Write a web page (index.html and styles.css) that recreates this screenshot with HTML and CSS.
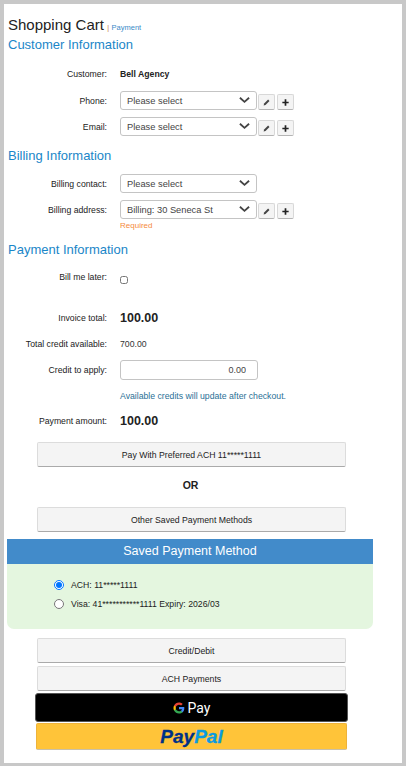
FILE: index.html
```html
<!DOCTYPE html>
<html lang="en">
<head>
  <meta charset="UTF-8" />
  <title>Shopping Cart</title>
  <meta name="viewport" content="width=device-width, initial-scale=1.0" />
  <link rel="stylesheet" href="styles.css">
</head>
<body>

<div class="panel">

  <div class="title-line">
    <span class="title">Shopping Cart</span>
    <span class="crumb-sep">|</span>
    <a class="crumb" href="#payment">Payment</a>
  </div>

  <!-- Customer -->
  <h2 class="h-customer">Customer Information</h2>
  <div class="row r-customer">
    <label>Customer:</label>
    <strong class="agency">Bell Agency</strong>
  </div>
  <div class="row r-phone">
    <label>Phone:</label>
    <div class="select-wrap">
      <select><option>Please select</option></select>
      <svg class="chev" viewBox="0 0 12 8"><path d="M1 1.500 6 6l5-4.500" /></svg>
    </div>
    <button class="tool"><svg viewBox="0 0 10 10"><path class="pen" d="M6.800 1.800 8.300 3.300 3.900 7.700 1.800 8.300 2.400 6.200Z" /></svg></button>
    <button class="tool"><svg viewBox="0 0 10 10"><path class="plus" d="M5 1.500v7M1.500 5h7" /></svg></button>
  </div>
  <div class="row r-email">
    <label>Email:</label>
    <div class="select-wrap">
      <select><option>Please select</option></select>
      <svg class="chev" viewBox="0 0 12 8"><path d="M1 1.500 6 6l5-4.500" /></svg>
    </div>
    <button class="tool"><svg viewBox="0 0 10 10"><path class="pen" d="M6.800 1.800 8.300 3.300 3.900 7.700 1.800 8.300 2.400 6.200Z" /></svg></button>
    <button class="tool"><svg viewBox="0 0 10 10"><path class="plus" d="M5 1.500v7M1.500 5h7" /></svg></button>
  </div>

  <!-- Billing -->
  <h2 class="h-billing">Billing Information</h2>
  <div class="row r-contact">
    <label>Billing contact:</label>
    <div class="select-wrap">
      <select><option>Please select</option></select>
      <svg class="chev" viewBox="0 0 12 8"><path d="M1 1.500 6 6l5-4.500" /></svg>
    </div>
  </div>
  <div class="row r-address">
    <label>Billing address:</label>
    <div class="select-wrap">
      <select><option>Billing: 30 Seneca St</option></select>
      <svg class="chev" viewBox="0 0 12 8"><path d="M1 1.500 6 6l5-4.500" /></svg>
    </div>
    <button class="tool"><svg viewBox="0 0 10 10"><path class="pen" d="M6.800 1.800 8.300 3.300 3.900 7.700 1.800 8.300 2.400 6.200Z" /></svg></button>
    <button class="tool"><svg viewBox="0 0 10 10"><path class="plus" d="M5 1.500v7M1.500 5h7" /></svg></button>
  </div>
  <div class="required">Required</div>

  <!-- Payment -->
  <h2 class="h-payment">Payment Information</h2>
  <div class="row r-later">
    <label>Bill me later:</label>
    <input class="check" type="checkbox" />
  </div>
  <div class="row r-invoice">
    <label>Invoice total:</label>
    <strong class="amount">100.00</strong>
  </div>
  <div class="row r-credit">
    <label>Total credit available:</label>
    <span class="plain">700.00</span>
  </div>
  <div class="row r-apply">
    <label>Credit to apply:</label>
    <input class="credit-input" type="text" value="0.00" />
  </div>
  <div class="credit-note">Available credits will update after checkout.</div>
  <div class="row r-amount">
    <label>Payment amount:</label>
    <strong class="amount">100.00</strong>
  </div>

  <button class="btn btn-preferred">Pay With Preferred ACH 11*****1111</button>
  <div class="or">OR</div>
  <button class="btn btn-other">Other Saved Payment Methods</button>

  <section class="saved">
    <div class="saved-head">Saved Payment Method</div>
    <div class="saved-body">
      <label class="radio-line"><input type="radio" name="saved" checked /> <span>ACH: 11*****1111</span></label>
      <label class="radio-line"><input type="radio" name="saved" /> <span>Visa: 41***********1111 Expiry: 2026/03</span></label>
    </div>
  </section>

  <button class="btn btn-credit">Credit/Debit</button>
  <button class="btn btn-ach">ACH Payments</button>
  <button class="gpay">
    <svg class="g-logo" viewBox="0 0 24 24">
      <path fill="#4285f4" d="M22.600 12.250c0-.8-.07-1.560-.2-2.250H12v4.260h5.940a5.080 5.080 0 0 1-2.200 3.330v2.770h3.570c2.080-1.920 3.290-4.740 3.290-8.110z" />
      <path fill="#34a853" d="M12 23c2.970 0 5.460-.98 7.280-2.660l-3.570-2.770c-.98.660-2.230 1.050-3.710 1.050-2.860 0-5.290-1.930-6.160-4.530H2.180v2.840A11 11 0 0 0 12 23z" />
      <path fill="#fbbc05" d="M5.840 14.090a6.600 6.600 0 0 1 0-4.180V7.070H2.180a11 11 0 0 0 0 9.860z" />
      <path fill="#ea4335" d="M12 5.380c1.620 0 3.060.56 4.210 1.640l3.150-3.150C17.450 2.090 14.970 1 12 1A11 11 0 0 0 2.180 7.070l3.660 2.840C6.710 7.310 9.140 5.380 12 5.380z" />
    </svg>
    <span>Pay</span>
  </button>
  <button class="paypal"><span class="pp-dark">Pay</span><span class="pp-light">Pal</span></button>

</div>

</body>
</html>
```

FILE: styles.css
```css
* { box-sizing: border-box; }
html, body { height: 100%; }
body {
  margin: 0;
  background: #c8c8c8;
  padding: 4px;
  font-family: "Liberation Sans", Arial, sans-serif;
  font-size: 8.700px;
  color: #222;
  overflow: hidden;
}

.panel {
  background: #fff;
  width: 398px;
  height: 759px;
  padding: 13px 0 0 3px;
}

.title-line { height: 15px; line-height: 15px; margin-left: 1px; white-space: nowrap; }
.title { font-size: 15px; color: #222; }
.crumb-sep { font-size: 7px; color: #c47a3a; margin-left: 1px; }
.crumb { font-size: 7.500px; color: #3a8bc8; text-decoration: none; }

h2 {
  font-size: 13px;
  line-height: 16px;
  font-weight: normal;
  color: #1a86c8;
  margin: 0 0 0 1px;
}
.h-customer { margin-top: 5px; }
.h-billing { margin-top: 12px; }
.h-payment { margin-top: 11px; }

.row { display: flex; align-items: center; }
.row label {
  width: 100px;
  margin-right: 13px;
  text-align: right;
  flex: none;
}

.r-customer { margin-top: 15px; height: 12px; }
.r-phone { margin-top: 11px; height: 19px; }
.r-email { margin-top: 7px; height: 19px; }
.r-contact { margin-top: 10px; height: 19px; }
.r-address { margin-top: 7px; height: 19px; }

.select-wrap { position: relative; width: 137px; height: 19px; flex: none; }
.select-wrap select {
  appearance: none;
  width: 100%;
  height: 100%;
  border: 1px solid #c4c4c4;
  border-radius: 3px;
  background: #fff;
  color: #444;
  font-family: inherit;
  font-size: 9.300px;
  padding: 0 0 0 6px;
}
.chev {
  position: absolute;
  right: 7px;
  top: 5px;
  width: 11px;
  height: 8px;
  pointer-events: none;
}
.chev path { fill: none; stroke: #444; stroke-width: 2; }

.tool {
  align-self: flex-end;
  width: 17px;
  height: 16px;
  margin-left: 1px;
  padding: 0;
  border: 1px solid #d8d8d8;
  border-bottom-color: #b5b5b5;
  border-radius: 2px;
  background: #f4f4f4;
  display: flex;
  align-items: center;
  justify-content: center;
}
.tool + .tool { margin-left: 2px; }
.tool svg { width: 9px; height: 9px; }
.pen { fill: #444; }
.plus { fill: none; stroke: #222; stroke-width: 1.900; }

.required {
  font-size: 8px;
  line-height: 10px;
  color: #f58a3c;
  margin: 2px 0 0 113px;
}

.r-later { margin-top: 13px; height: 12px; }
.check {
  width: 8px;
  height: 8px;
  margin: 5px 0 0;
  flex: none;
}
.r-invoice { margin-top: 27px; height: 16px; }
.amount { font-size: 12.500px; }
.r-credit { margin-top: 12px; height: 12px; }
.plain { color: #333; }
.r-apply { margin-top: 10px; height: 20px; }
.credit-input {
  width: 138px;
  height: 20px;
  border: 1px solid #c4c4c4;
  border-radius: 3px;
  text-align: right;
  padding: 0 11px 0 0;
  font-family: inherit;
  font-size: 9px;
  color: #444;
}
.credit-note {
  margin: 11px 0 0 113px;
  line-height: 10px;
  color: #2a7096;
}
.r-amount { margin-top: 12px; height: 16px; }

.btn {
  display: block;
  width: 309px;
  height: 25px;
  margin-left: 30px;
  padding: 0;
  border: 1px solid #dcdcdc;
  border-bottom-color: #aaa;
  border-radius: 2px;
  background: #f4f4f4;
  font-family: inherit;
  font-size: 8.700px;
  color: #222;
}
.btn-preferred { margin-top: 13px; }
.or {
  width: 309px;
  margin: 11px 0 0 29px;
  font-size: 10.500px;
  line-height: 14px;
  font-weight: bold;
  text-align: center;
}
.btn-other { margin-top: 15px; }

.saved { width: 366px; margin: 7px 0 0 0; }
.saved-head {
  background: #428bca;
  color: #fff;
  font-size: 12.500px;
  line-height: 25px;
  height: 25px;
  text-align: center;
}
.saved-body {
  background: #e4f6df;
  height: 65px;
  border-radius: 0 0 7px 7px;
  padding: 14px 0 0 47px;
}
.radio-line { display: flex; align-items: center; height: 14px; margin-bottom: 5px; gap: 7px; }
.radio-line input { width: 10px; height: 10px; margin: 0; }

.btn-credit { margin-top: 9px; }
.btn-ach { margin-top: 3px; }

.gpay {
  display: flex;
  align-items: center;
  justify-content: center;
  gap: 3px;
  width: 313px;
  height: 29px;
  margin: 2px 0 0 28px;
  padding: 0;
  border: 1px solid #555;
  border-radius: 3px;
  background: #000;
  color: #fff;
  font-family: Roboto, sans-serif;
  font-size: 14px;
}
.g-logo { width: 12px; height: 12px; }

.paypal {
  display: block;
  width: 311px;
  height: 27px;
  margin: 1px 0 0 29px;
  padding: 0;
  border: 1px solid #eeb33a;
  border-bottom-color: #c9c0a8;
  border-radius: 2px;
  background: #ffc439;
  font-family: "Liberation Sans", Arial, sans-serif;
  font-size: 19px;
  line-height: 24px;
  font-weight: bold;
  font-style: italic;
  -webkit-text-stroke: 0.300px;
}
.pp-dark { color: #003087; }
.pp-light { color: #0a9be0; }
```
